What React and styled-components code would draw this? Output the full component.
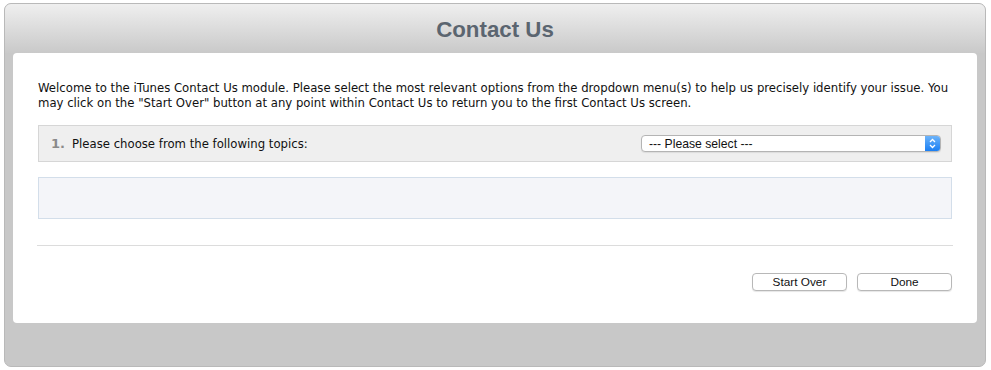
import React from "react";
import styled, { createGlobalStyle } from "styled-components";

const GlobalStyle = createGlobalStyle`
  body {
    margin: 0;
    background: #fff;
    font-family: "DejaVu Sans", Verdana, sans-serif;
  }
`;

const Panel = styled.div`
  margin: 3px 0 0 4px;
  width: 982px;
  height: 364px;
  box-sizing: border-box;
  border: 1px solid #b9b9b9;
  border-radius: 7px;
  background: #c8c8c8;
  overflow: hidden;
  display: flex;
  flex-direction: column;
`;

const Header = styled.div`
  height: 49px;
  flex: none;
  display: flex;
  align-items: center;
  justify-content: center;
  background: linear-gradient(#efefef, #c9c9c9);
`;

const Title = styled.h1`
  margin: 0;
  padding-top: 2px;
  font-family: "Liberation Sans", Arial, sans-serif;
  font-size: 22.3px;
  font-weight: bold;
  color: #5b6570;
`;

const Card = styled.div`
  margin: 0 8px;
  height: 270px;
  box-sizing: border-box;
  background: #fff;
  border-radius: 4px;
  padding: 28px 25px 0 25px;
  display: flex;
  flex-direction: column;
`;

const Intro = styled.p`
  margin: 0 0 14px;
  font-size: 11.7px;
  line-height: 15px;
  color: #111;
`;

const TopicRow = styled.div`
  height: 37px;
  box-sizing: border-box;
  background: #efefef;
  border: 1px solid #d6d6d6;
  display: flex;
  align-items: center;
  padding: 0 10px 0 12px;
`;

const Num = styled.span`
  font-size: 13px;
  font-weight: bold;
  color: #8a8a8a;
  width: 21px;
`;

const Label = styled.span`
  flex: 1;
  font-size: 11.7px;
  color: #111;
`;

const Select = styled.div`
  width: 300px;
  height: 17px;
  box-sizing: border-box;
  border: 1px solid #b4b4b4;
  border-radius: 4px;
  background: #fff;
  display: flex;
  align-items: center;
  overflow: hidden;
  box-shadow: 0 1px 1px rgba(0, 0, 0, 0.08);
`;

const SelectText = styled.span`
  flex: 1;
  padding-left: 7px;
  font-family: "Liberation Sans", Arial, sans-serif;
  font-size: 12.2px;
  color: #111;
`;

const Stepper = styled.span`
  width: 15px;
  height: 100%;
  background: linear-gradient(#6cb3fa, #1a7ff3);
  display: flex;
  align-items: center;
  justify-content: center;
`;

const Answer = styled.div`
  margin-top: 15px;
  height: 42px;
  box-sizing: border-box;
  background: #f4f5f9;
  border: 1px solid #d3deea;
`;

const Divider = styled.hr`
  margin: 26px -1px 0;
  border: 0;
  border-top: 1px solid #dcdcdc;
`;

const Actions = styled.div`
  margin-top: 27px;
  display: flex;
  justify-content: flex-end;
  gap: 10px;
`;

const Button = styled.button`
  width: 95px;
  height: 18px;
  padding: 0;
  background: #fff;
  border: 1px solid #b8b8b8;
  border-radius: 4px;
  box-shadow: 0 1px 1px rgba(0, 0, 0, 0.1);
  font-family: "Liberation Sans", Arial, sans-serif;
  font-size: 11.8px;
  color: #111;
`;

const Arrows = () => (
  <svg width="7" height="11" viewBox="0 0 7 11">
    <path d="M1 4 L3.5 1.5 L6 4 M1 7 L3.5 9.5 L6 7" fill="none" stroke="#fff" strokeWidth="1.3" />
  </svg>
);

const App = () => (
  <>
    <GlobalStyle />
    <Panel>
      <Header>
        <Title>Contact Us</Title>
      </Header>
      <Card>
        <Intro>
          Welcome to the iTunes Contact Us module. Please select the most relevant options from the
          dropdown menu(s) to help us precisely identify your issue. You may click on the "Start
          Over" button at any point within Contact Us to return you to the first Contact Us screen.
        </Intro>
        <TopicRow>
          <Num>1.</Num>
          <Label>Please choose from the following topics:</Label>
          <Select>
            <SelectText>--- Please select ---</SelectText>
            <Stepper>
              <Arrows />
            </Stepper>
          </Select>
        </TopicRow>
        <Answer />
        <Divider />
        <Actions>
          <Button>Start Over</Button>
          <Button>Done</Button>
        </Actions>
      </Card>
    </Panel>
  </>
);

export default App;
